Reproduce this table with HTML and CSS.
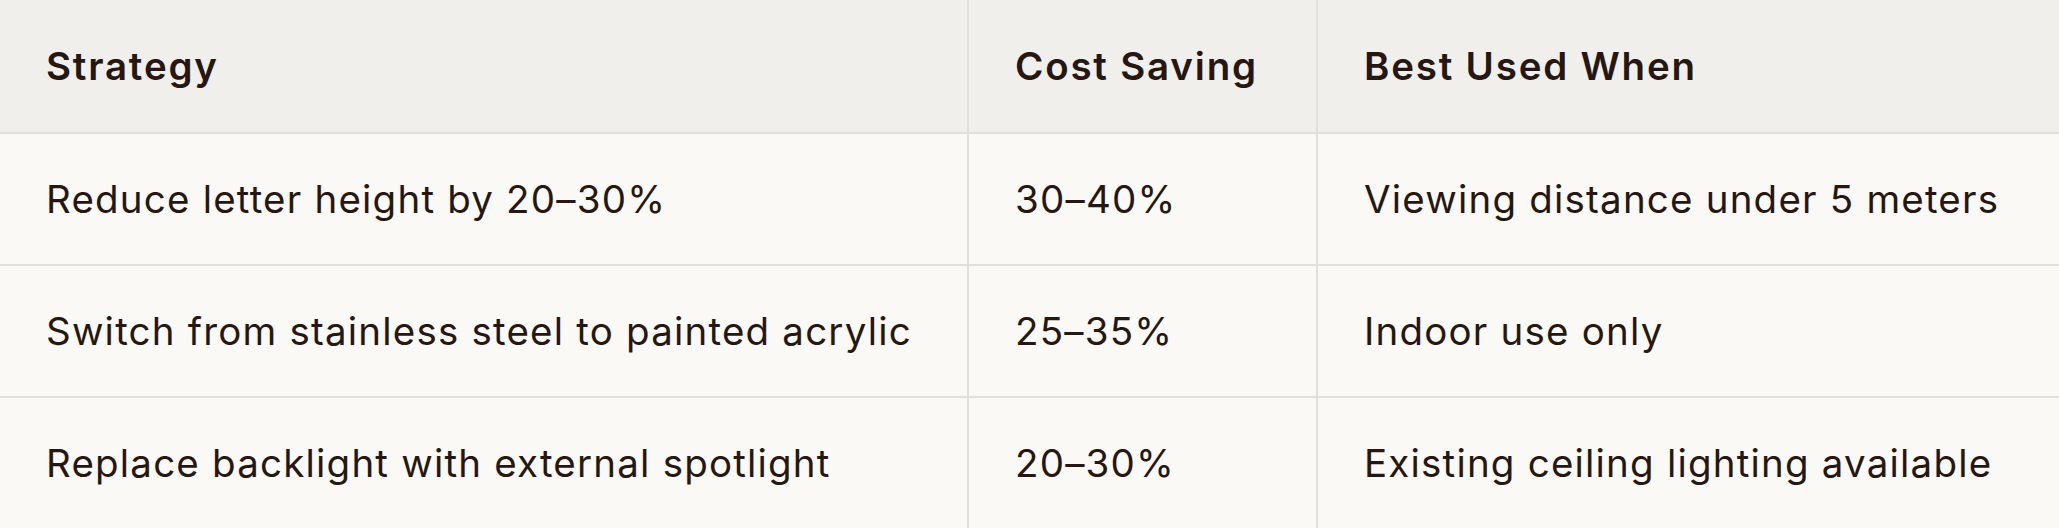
FILE: index.html
```html
<!DOCTYPE html>
<html>
<head>
<meta charset="utf-8">
<link rel="stylesheet" href="styles.css">
</head>
<body>
<table class="tbl">
  <colgroup>
    <col class="c1">
    <col class="c2">
    <col class="c3">
  </colgroup>
  <thead>
    <tr>
      <th>Strategy</th>
      <th>Cost Saving</th>
      <th>Best Used When</th>
    </tr>
  </thead>
  <tbody>
    <tr>
      <td>Reduce letter height by 20–30%</td>
      <td>30–40%</td>
      <td>Viewing distance under 5 meters</td>
    </tr>
    <tr>
      <td>Switch from stainless steel to painted acrylic</td>
      <td>25–35%</td>
      <td>Indoor use only</td>
    </tr>
    <tr>
      <td>Replace backlight with external spotlight</td>
      <td>20–30%</td>
      <td>Existing ceiling lighting available</td>
    </tr>
  </tbody>
</table>
</body>
</html>
```
FILE: styles.css
```css
html, body {
  margin: 0;
  padding: 0;
  background: #faf9f6;
  overflow: hidden;
}
.tbl {
  border-collapse: separate;
  border-spacing: 0;
  table-layout: fixed;
  width: 2059px;
  font-family: Inter, "Noto Sans", sans-serif;
  color: #261712;
}
.c1 { width: 969px; }
.c2 { width: 349px; }
.c3 { width: 741px; }
th, td {
  box-sizing: border-box;
  text-align: left;
  vertical-align: middle;
  padding: 0 40px 0 46px;
  border-bottom: 2px solid #e1dfdc;
  border-right: 2px solid #e1dfdc;
  white-space: nowrap;
  font-size: 38.5px;
  letter-spacing: 1.2px;
}
th:last-child, td:last-child { border-right: 0; }
th {
  height: 134px;
  background: #f0efeb;
  font-weight: 600;
  letter-spacing: 1.8px;
}
td {
  height: 132px;
  background: #faf9f6;
  font-weight: 400;
}
```
